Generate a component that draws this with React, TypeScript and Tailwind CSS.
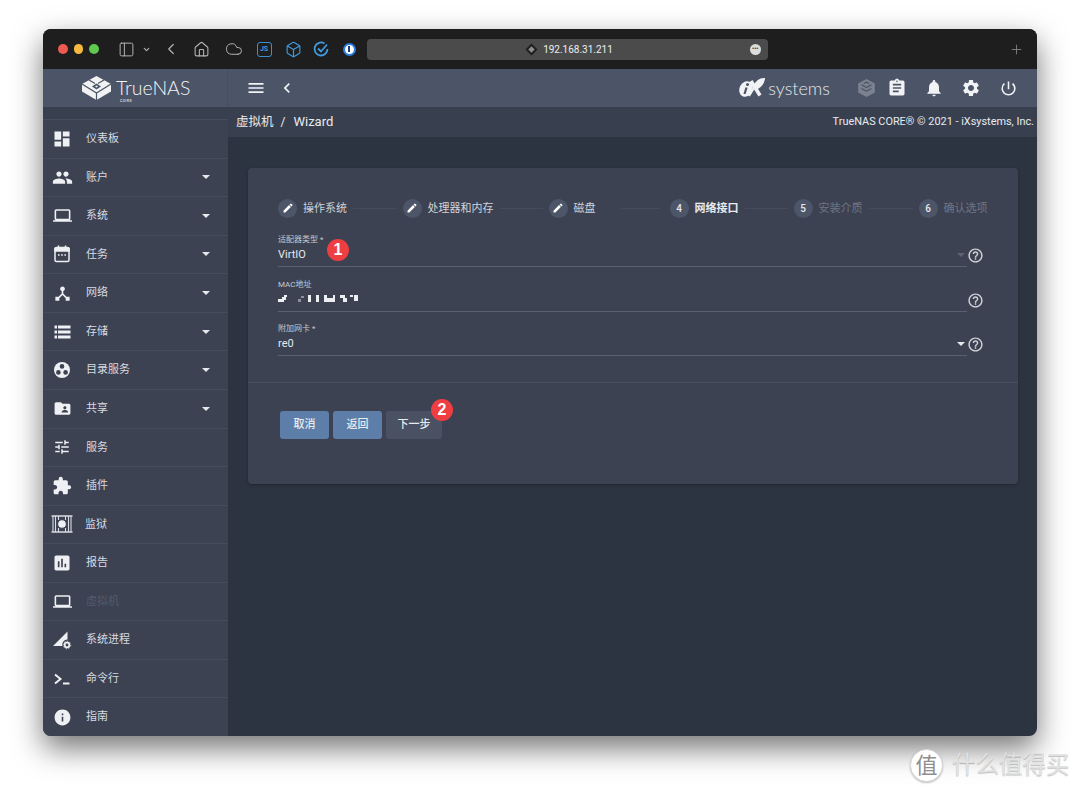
import { ChevronDown, ChevronLeft, Cloud, Box, Home, PanelLeft, Plus } from "lucide-react"
import {
  MdAssessment, MdAssignment, MdChevronLeft, MdDashboard, MdDeviceHub, MdEdit, MdExtension, MdFolderShared,
  MdHelpOutline, MdInfo, MdLaptop, MdMenu, MdNotifications, MdPeople, MdPowerSettingsNew, MdSettings, MdTune,
} from "react-icons/md"
import type { ReactNode } from "react"

const font = "font-['Roboto','Noto_Sans_CJK_SC',sans-serif]"

function Caret({ className = "" }: { className?: string }) {
  return <span className={`block w-0 h-0 border-x-[4px] border-x-transparent border-t-[4px] border-t-[#e6e8ec] ${className}`} />
}

function CalendarIcon() {
  return (
    <svg width="16" height="18" viewBox="0 0 16 18" fill="none" stroke="#eef0f3" strokeWidth="1.5">
      <rect x="1" y="2.5" width="14" height="14" rx="1.5" />
      <path d="M1 3.5h14v2.5H1z" fill="#eef0f3" />
      <path d="M4.5 0.5v3M11.5 0.5v3" />
      <path d="M4 10h1.6M7.2 10h1.6M10.4 10H12" />
    </svg>
  )
}

function StorageIcon() {
  return (
    <svg width="17" height="14" viewBox="0 0 17 14" fill="#eef0f3">
      <path d="M0.5 0.5h2.5v3H0.5zM4 0.5h12.5v3H4zM0.5 5.5h2.5v3H0.5zM4 5.5h12.5v3H4zM0.5 10.5h2.5v3H0.5zM4 10.5h12.5v3H4z" />
    </svg>
  )
}

function DirectoryIcon() {
  return (
    <svg width="18" height="18" viewBox="0 0 18 18">
      <circle cx="9" cy="9" r="8" fill="#eef0f3" />
      <circle cx="9" cy="5.4" r="2.3" fill="#3c4252" />
      <circle cx="5.4" cy="11.4" r="2.3" fill="#3c4252" />
      <circle cx="12.6" cy="11.4" r="2.3" fill="#3c4252" />
    </svg>
  )
}

function JailIcon() {
  return (
    <svg width="22" height="18" viewBox="0 0 22 18" fill="none" stroke="#d9dce2" strokeWidth="1.1">
      <path d="M0.5 1h21M0.5 17h21" strokeWidth="1.6" />
      <path d="M2 1v16M4.5 1v16M17.5 1v16M20 1v16" />
      <circle cx="11" cy="9" r="4.4" fill="#eef0f3" stroke="#3c4252" />
      <path d="M7.5 1v4M14.5 1v4M7.5 13v4M14.5 13v4" />
    </svg>
  )
}

function ProcessIcon() {
  return (
    <svg width="20" height="20" viewBox="0 0 20 20">
      <path d="M1 16L15.5 1.5v8a5 5 0 0 0-5 6.5z" fill="#eef0f3" />
      <circle cx="15" cy="15" r="2.3" fill="none" stroke="#eef0f3" strokeWidth="1.7" />
      <circle cx="15" cy="15" r="3.7" fill="none" stroke="#eef0f3" strokeWidth="0.9" strokeDasharray="1.4 1.4" />
    </svg>
  )
}

function ShellIcon() {
  return (
    <svg width="16" height="12" viewBox="0 0 16 12" fill="none" stroke="#eef0f3" strokeWidth="2">
      <path d="M1 1.5L6.5 6 1 10.5" />
      <path d="M9 10.5h6.5" />
    </svg>
  )
}

const ic = "text-[#eef0f3]"
const navItems: { label: string; icon: ReactNode; caret?: boolean; dim?: boolean; shift?: boolean }[] = [
  { label: "仪表板", icon: <MdDashboard size={20} className={ic} /> },
  { label: "账户", icon: <MdPeople size={21} className={ic} />, caret: true },
  { label: "系统", icon: <MdLaptop size={19} className={ic} />, caret: true },
  { label: "任务", icon: <CalendarIcon />, caret: true },
  { label: "网络", icon: <MdDeviceHub size={19} className={ic} />, caret: true },
  { label: "存储", icon: <StorageIcon />, caret: true },
  { label: "目录服务", icon: <DirectoryIcon />, caret: true },
  { label: "共享", icon: <MdFolderShared size={19} className={ic} />, caret: true },
  { label: "服务", icon: <MdTune size={18} className={ic} /> },
  { label: "插件", icon: <MdExtension size={20} className={ic} /> },
  { label: "监狱", icon: <JailIcon />, shift: true },
  { label: "报告", icon: <MdAssessment size={20} className={ic} /> },
  { label: "虚拟机", icon: <MdLaptop size={19} className={ic} />, dim: true },
  { label: "系统进程", icon: <ProcessIcon /> },
  { label: "命令行", icon: <ShellIcon /> },
  { label: "指南", icon: <MdInfo size={19} className={ic} /> },
]

// widths hold each step's distance to the next circle
const steps = [
  { label: "操作系统", mark: "edit", width: "w-[124.5px]" },
  { label: "处理器和内存", mark: "edit", width: "w-[146px]" },
  { label: "磁盘", mark: "edit", width: "w-[121px]" },
  { label: "网络接口", mark: "4", active: true, width: "w-[124px]" },
  { label: "安装介质", mark: "5", muted: true, width: "w-[125px]" },
  { label: "确认选项", mark: "6", muted: true, width: "" },
]

function MacMosaic() {
  const cells = [
    [0, 4, 6, 3], [4, 2, 4, 3], [6, 0, 3, 2], [20, 4, 3, 3], [23, 1, 3, 2], [30, 0, 3, 7], [38, 0, 3, 7],
    [46, 0, 3, 7], [49, 3, 6, 4], [55, 0, 2, 7], [62, 0, 5, 3], [65, 3, 4, 4], [72, 0, 3, 2], [76, 0, 4, 6],
  ]
  return (
    <svg width="81" height="8" viewBox="0 0 81 8" className="block">
      {cells.map(([x, y, w, h], i) => (
        <rect key={i} x={x} y={y} width={w} height={h} fill={i === 3 || i === 4 ? "#8b909b" : "#eceef1"} />
      ))}
    </svg>
  )
}

function Badge({ n, className }: { n: number; className: string }) {
  return (
    <span className={`absolute w-[22px] h-[22px] rounded-full bg-[#ee3e41] text-white text-[16px] font-bold font-['Liberation_Sans',sans-serif] flex items-center justify-center ${className}`}>
      {n}
    </span>
  )
}

function Field({ label, children, caret, badge }: { label: string; children: ReactNode; caret?: "on" | "off"; badge?: boolean }) {
  return (
    <div className="flex h-[44.5px]">
      <div className="relative w-[689px] h-[31px] border-b border-[#5a6071] flex flex-col">
        <div className="text-[8px] leading-[10px] mt-[-1px] text-[#c6c9d0]">{label}</div>
        <div className="text-[11px] leading-[14px] mt-[2.5px] text-[#e6e8ec] h-[14px] flex items-center">{children}</div>
        {caret && <Caret className={`absolute right-[2px] top-[17px] ${caret === "off" ? "opacity-20" : ""}`} />}
        {badge && <Badge n={1} className="left-[49px] top-[3px]" />}
      </div>
      <MdHelpOutline size={17} className="mt-[11px] text-[#d4d6dc]" />
    </div>
  )
}

export default function App() {
  return (
    <div className={`relative w-[1080px] h-[793px] bg-white overflow-hidden pt-[29px] pl-[43px] ${font}`}>
      <div className="w-[994px] h-[707px] rounded-[8px] overflow-hidden flex flex-col bg-[#2d3441] shadow-[0_12px_30px_rgba(0,0,0,0.55)]">
        {/* browser chrome */}
        <div className="h-[40px] shrink-0 bg-[#1e1e1e] flex items-center text-[#b4b4b4]">
          <span className="ml-[15px] w-[9.5px] h-[9.5px] rounded-full bg-[#ee5a52]" />
          <span className="ml-[6px] w-[9.5px] h-[9.5px] rounded-full bg-[#f5b93f]" />
          <span className="ml-[6px] w-[9.5px] h-[9.5px] rounded-full bg-[#5fc84f]" />
          <PanelLeft size={17} strokeWidth={1.4} className="ml-[19px]" />
          <ChevronDown size={9} strokeWidth={3} className="ml-[7px]" />
          <ChevronLeft size={18} strokeWidth={1.6} className="ml-[11px]" />
          <Home size={17} strokeWidth={1.5} className="ml-[13px]" />
          <Cloud size={18} strokeWidth={1.3} className="ml-[15px]" />
          <span className="ml-[14px] w-[15px] h-[15px] rounded-[3px] border border-[#3f8fd0] text-[#3f9be0] text-[7px] font-bold flex items-center justify-center">JS</span>
          <Box size={17} strokeWidth={1.6} className="ml-[13px] text-[#3f9be0]" />
          <svg width="18" height="18" viewBox="0 0 18 18" fill="none" stroke="#3f9be0" strokeWidth="1.8" className="ml-[10px]">
            <path d="M15.5 9a6.5 6.5 0 1 1-3-5.500" />
            <path d="M6 8.500l3 3 6-7" />
          </svg>
          <span className="ml-[13px] w-[13px] h-[13px] rounded-full bg-white border-2 border-[#2b7de0] flex items-center justify-center">
            <span className="w-[2.5px] h-[6px] bg-[#1c3f73]" />
          </span>
          <div className="relative ml-[11px] w-[401px] h-[21px] rounded-[4px] bg-[#4b4b4b] flex items-center justify-center pl-[4px]">
            <svg width="13" height="13" viewBox="0 0 12 12" className="mr-[5px]">
              <path d="M6 0.500L11.500 6 6 11.500 0.500 6z" fill="#1d1d1d" />
              <path d="M6 3L9 6 6 9 3 6z" fill="#8c8c8c" />
            </svg>
            <span className="text-[10px] mt-[1px] text-[#eceef1]">192.168.31.211</span>
            <span className="absolute right-[7px] top-[5px] w-[11px] h-[11px] rounded-full bg-[#dcdcdc] flex items-center justify-center text-[#4b4b4b] text-[8px] leading-[6px] tracking-[-0.5px]">•••</span>
          </div>
          <Plus size={15} strokeWidth={1.3} className="ml-auto mr-[13px] text-[#8c8c8c]" />
        </div>

        <div className="flex-1 flex min-h-0">
          {/* sidebar */}
          <aside className="w-[185px] shrink-0 flex flex-col bg-[#3c4252]">
            <div className="h-[38px] shrink-0 bg-[#4c5568] flex items-center pl-[39px] text-[#f1f2f4] border-r border-[#454d5f]">
              <svg width="29" height="24" viewBox="0 0 29 24" fill="#f1f2f4">
                <path d="M14.500 0L29 8v7.500L14.500 24 0 15.500V8z" />
                <path d="M14.500 7.500L19 10.500 14.500 13.500 10 10.500z" fill="#4c5568" />
                <path d="M14.500 9.500L16 10.500 14.500 11.500 13 10.500z" />
                <path d="M0 8l14.500 9L29 8M14.500 17v7M7 4l6 3.500M22 4l-6 3.500" fill="none" stroke="#4c5568" strokeWidth="1.2" />
              </svg>
              <div className="ml-[5px] relative">
                <span className="block font-['Lato',sans-serif] font-light text-[19.5px] leading-[20px]">TrueNAS</span>
                <span className="absolute left-[4px] top-[21px] text-[4px] font-bold leading-none tracking-[0.5px] text-[#c9ccd3]">CORE</span>
              </div>
            </div>
            <div className="h-[12px] shrink-0 bg-[#384050]" />
            <nav className="flex-1 flex flex-col min-h-0">
              {navItems.map((item) => (
                <div key={item.label} className="flex-1 flex items-center border-t border-[#464c5d]">
                  <span className="w-[38px] shrink-0 flex justify-center">{item.icon}</span>
                  <span className={`ml-[5px] mt-[1px] text-[11px] ${item.shift ? "-translate-x-[1px]" : ""} ${item.dim ? "text-[#535a6b]" : "text-[#d8dae0]"}`}>{item.label}</span>
                  {item.caret && <Caret className="ml-auto mr-[18px]" />}
                </div>
              ))}
            </nav>
          </aside>

          {/* main */}
          <div className="flex-1 flex flex-col min-w-0">
            <header className="h-[38px] shrink-0 bg-[#4c5568] flex items-center text-[#f1f2f4]">
              <MdMenu size={20} className="ml-[18px]" />
              <MdChevronLeft size={20} className="ml-[11px]" />
              <div className="ml-auto flex items-center">
                <svg width="26" height="20" viewBox="0 0 26 20" fill="#f1f2f4">
                  <ellipse cx="7" cy="11" rx="6.500" ry="8" transform="rotate(25 7 11)" />
                  <circle cx="8.500" cy="6.500" r="1.500" fill="#4c5568" />
                  <path d="M7.500 9.500L5.500 16" stroke="#4c5568" strokeWidth="2.200" />
                  <path d="M12 3l9 14.500" fill="none" stroke="#f1f2f4" strokeWidth="3.600" />
                  <path d="M15 10l-5 8M15 9c2-5 5-8 10-8-1 5-4 8-8 10z" stroke="#f1f2f4" strokeWidth="2" />
                </svg>
                <span className="font-['Lato',sans-serif] font-light text-[18px] leading-none text-[#e4e6ea] ml-[3px] mb-[1px]">systems</span>
                <svg width="19" height="20" viewBox="0 0 17 18" fill="none" className="ml-[27px]">
                  <path d="M8.500 1L16 5v8l-7.500 4L1 13V5z" fill="#7b818e" />
                  <path d="M4 6l4.500 2.500L13 6M4 9.500L8.500 12 13 9.500M6 5l2.500-1.300L11 5" stroke="#4c5568" strokeWidth="1.100" />
                </svg>
                <MdAssignment size={20} className="ml-[11px]" />
                <MdNotifications size={20} className="ml-[17px]" />
                <MdSettings size={20} className="ml-[17px]" />
                <MdPowerSettingsNew size={19} className="ml-[18px] mr-[19px]" />
              </div>
            </header>
            <div className="h-[30px] shrink-0 bg-[#384050] flex items-center pl-[8px] pr-[3px] text-[#e8eaee]">
              <span className="text-[12.5px]">虚拟机</span>
              <span className="text-[12px] ml-[7px]">/</span>
              <span className="text-[13px] ml-[8px]">Wizard</span>
              <span className="ml-auto text-[10.9px]">TrueNAS CORE® © 2021 - iXsystems, Inc.</span>
            </div>

            <div className="flex-1 pt-[31px] pl-[20px] pr-[19px]">
              <section className="h-[316px] rounded-[4px] bg-[#3c4252] shadow-[0_1px_3px_rgba(0,0,0,0.3)] flex flex-col">
                <div className="flex items-center h-[18px] mt-[31px] ml-[30px] mr-[30px]">
                  {steps.map((s, i) => (
                    <div key={s.label} className={`flex items-center shrink-0 ${s.width}`}>
                      <span className="w-[19px] h-[19px] rounded-full bg-[#4d5568] flex items-center justify-center text-[10px] font-medium text-[#e8eaee] shrink-0">
                        {s.mark === "edit" ? <MdEdit size={12} className="text-white" /> : s.mark}
                      </span>
                      <span className={`ml-[6px] mt-[2px] text-[11px] shrink-0 ${s.active ? "font-bold text-[#e8eaee]" : s.muted ? "text-[#6f7583]" : "text-[#d0d3d9]"}`}>{s.label}</span>
                      {i < 5 && <span className={`flex-1 h-px bg-[#464c5d] ${i === 2 ? "ml-[25px] mr-[10px]" : "mx-[6px]"}`} />}
                    </div>
                  ))}
                </div>
                <div className="ml-[30px] mt-[19px]">
                  <Field label="适配器类型 *" caret="off" badge>VirtIO</Field>
                  <Field label="MAC地址"><MacMosaic /></Field>
                  <Field label="附加网卡 *" caret="on">re0</Field>
                </div>
                <div className="h-px bg-[#4a5060] mt-[12.5px]" />
                <div className="flex ml-[32px] mt-[27.5px] gap-[4px] text-[11px] font-medium text-[#e8eaee]">
                  <button className="w-[49px] h-[28px] pt-[1px] rounded-[3px] bg-[#5c7ea8]">取消</button>
                  <button className="w-[49px] h-[28px] pt-[1px] rounded-[3px] bg-[#5c7ea8]">返回</button>
                  <button className="relative w-[56px] h-[28px] pt-[1px] rounded-[3px] bg-[#4a5163]">
                    下一步
                    <Badge n={2} className="left-[45px] top-[-12px]" />
                  </button>
                </div>
              </section>
            </div>
          </div>
        </div>
      </div>

      {/* watermark */}
      <div className="absolute left-[910px] top-[749px] flex items-center">
        <span className="w-[33px] h-[33px] rounded-full bg-white border border-[#d8d8d8] text-[#8f8f8f] text-[22px] leading-none flex items-center justify-center shadow-[0_1px_2px_rgba(0,0,0,0.25)]">值</span>
        <span className="ml-[9px] text-[23.5px] leading-none text-[#e2e2e2] [text-shadow:0_1px_1px_rgba(0,0,0,0.25)]">什么值得买</span>
      </div>
    </div>
  )
}
